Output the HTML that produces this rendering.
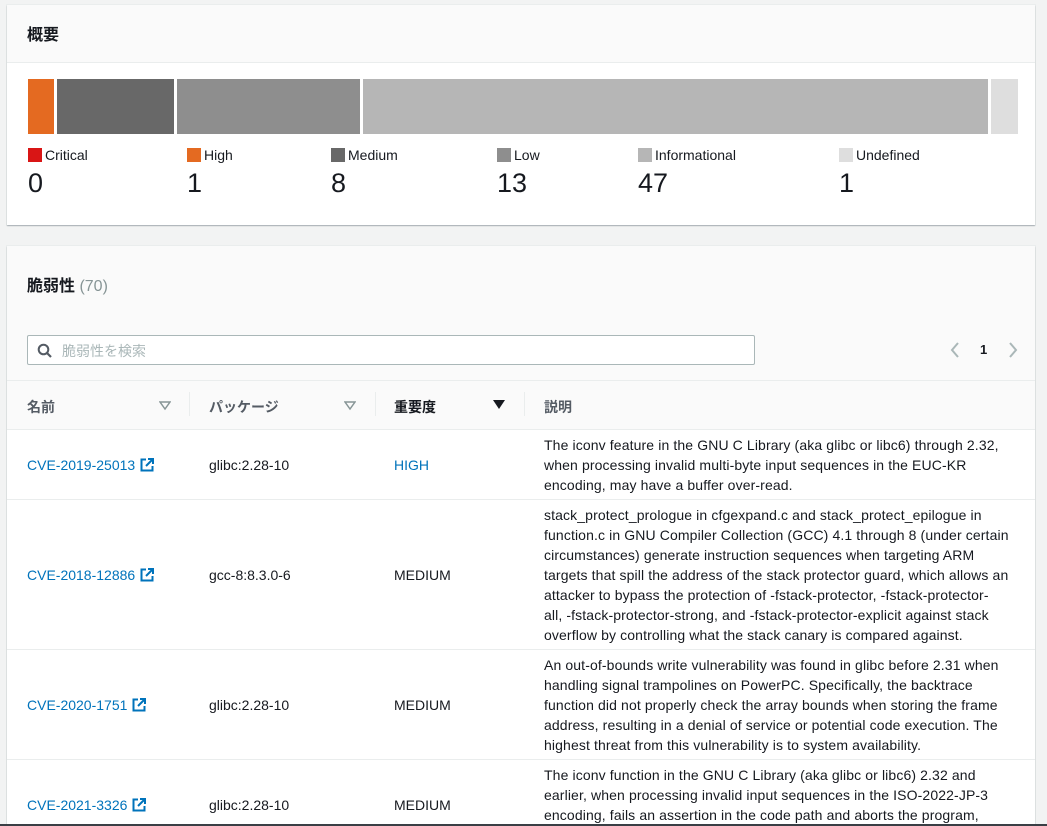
<!DOCTYPE html>
<html><head><meta charset="utf-8"><style>
*{margin:0;padding:0;box-sizing:border-box}
body{width:1047px;height:826px;overflow:hidden;background:#f2f3f3;font-family:"Liberation Sans","Noto Sans CJK JP",sans-serif;color:#16191f;position:relative;font-size:14px}
.a{position:absolute;white-space:nowrap}
.card{position:absolute;left:7px;width:1028px;background:#fff;box-shadow:0 1px 1px rgba(0,22,40,.3),0 0 0 1px #eaeded}
.seg{position:absolute;top:79px;height:55px}
.sw{display:inline-block;width:14px;height:14px;vertical-align:-2px;margin-right:3px}
.lg{position:absolute;top:147px;font-size:14px;color:#16191f}
.num{position:absolute;top:168px;font-size:27px;color:#16191f}
.hl{position:absolute;left:0;width:1028px;height:1px;background:#eaeded}
.link{color:#0073bb}
.desc{position:absolute;left:537px;line-height:20px;font-size:14px;letter-spacing:.12px;white-space:nowrap}
.ext{display:inline-block;vertical-align:-2px;margin-left:5px}
</style></head><body>
<div class="card" style="top:5px;height:220px">
 <div style="position:absolute;left:0;top:0;width:100%;height:58px;background:#fafafa;border-bottom:1px solid #eaeded"></div>
 <div class="a" style="left:20px;top:16px;font-size:16px;font-weight:bold">概要</div>
 <div class="seg" style="left:21px;width:26px;background:#e46a21;top:74px"></div>
 <div class="seg" style="left:50px;width:117px;background:#686868;top:74px"></div>
 <div class="seg" style="left:170px;width:183px;background:#8e8e8e;top:74px"></div>
 <div class="seg" style="left:356px;width:625px;background:#b6b6b6;top:74px"></div>
 <div class="seg" style="left:984px;width:27px;background:#dedede;top:74px"></div>
 <div class="lg" style="left:21px;top:142px"><span class="sw" style="background:#d91515"></span>Critical</div>
 <div class="lg" style="left:180px;top:142px"><span class="sw" style="background:#e46a21"></span>High</div>
 <div class="lg" style="left:324px;top:142px"><span class="sw" style="background:#686868"></span>Medium</div>
 <div class="lg" style="left:490px;top:142px"><span class="sw" style="background:#8e8e8e"></span>Low</div>
 <div class="lg" style="left:631px;top:142px"><span class="sw" style="background:#b6b6b6"></span>Informational</div>
 <div class="lg" style="left:832px;top:142px"><span class="sw" style="background:#dedede"></span>Undefined</div>
 <div class="num" style="left:21px;top:163px">0</div>
 <div class="num" style="left:180px;top:163px">1</div>
 <div class="num" style="left:324px;top:163px">8</div>
 <div class="num" style="left:490px;top:163px">13</div>
 <div class="num" style="left:631px;top:163px">47</div>
 <div class="num" style="left:832px;top:163px">1</div>
</div>

<div class="card" style="top:246px;height:580px">
 <div style="position:absolute;left:0;top:0;width:100%;height:184px;background:#fafafa"></div>
 <div class="a" style="left:20px;top:26px;font-size:16px;font-weight:bold">脆弱性 <span style="font-weight:normal;color:#879596">(70)</span></div>
 <div style="position:absolute;left:20px;top:89px;width:728px;height:30px;border:1px solid #aab7b8;border-radius:2px;background:#fff"></div>
 <svg class="a" style="left:30px;top:97px" width="16" height="16" viewBox="0 0 16 16"><circle cx="6.5" cy="6.5" r="4.8" fill="none" stroke="#545b64" stroke-width="2"/><path d="M10 10l4 4" stroke="#545b64" stroke-width="2.2"/></svg>
 <div class="a" style="left:55px;top:95px;color:#aab7b8;font-size:14px">脆弱性を検索</div>
 <svg class="a" style="left:942px;top:96px" width="12" height="16" viewBox="0 0 12 16"><path d="M9 1L3 8l6 7" fill="none" stroke="#aab7b8" stroke-width="2"/></svg>
 <div class="a" style="left:973px;top:96px;font-weight:bold;font-size:13px">1</div>
 <svg class="a" style="left:1000px;top:96px" width="12" height="16" viewBox="0 0 12 16"><path d="M3 1l6 7-6 7" fill="none" stroke="#aab7b8" stroke-width="2"/></svg>
 <div class="hl" style="top:134px"></div>
 <div class="hl" style="top:183px"></div>
 <div class="a" style="left:20px;top:151px;font-weight:bold;color:#545b64">名前</div>
 <svg class="a" style="left:152px;top:155px" width="12" height="10" viewBox="0 0 12 10"><path d="M1 1h10L6 8z" fill="none" stroke="#879596" stroke-width="1.5"/></svg>
 <div style="position:absolute;left:182px;top:146px;width:1px;height:24px;background:#eaeded"></div>
 <div class="a" style="left:202px;top:151px;font-weight:bold;color:#545b64">パッケージ</div>
 <svg class="a" style="left:337px;top:155px" width="12" height="10" viewBox="0 0 12 10"><path d="M1 1h10L6 8z" fill="none" stroke="#879596" stroke-width="1.5"/></svg>
 <div style="position:absolute;left:368px;top:146px;width:1px;height:24px;background:#eaeded"></div>
 <div class="a" style="left:387px;top:151px;font-weight:bold">重要度</div>
 <svg class="a" style="left:486px;top:154px" width="12" height="10" viewBox="0 0 12 10"><path d="M0 0h12L6 9z" fill="#16191f"/></svg>
 <div style="position:absolute;left:517px;top:146px;width:1px;height:24px;background:#eaeded"></div>
 <div class="a" style="left:537px;top:151px;font-weight:bold;color:#545b64">説明</div>

 <div class="a link" style="left:20px;top:211px">CVE-2019-25013<svg class="ext" width="14" height="14" viewBox="0 0 14 14"><path d="M6 1.5H1.5v11h11V8" fill="none" stroke="#0073bb" stroke-width="2"/><path d="M8 1h5v5M13 1L6 8" fill="none" stroke="#0073bb" stroke-width="2"/></svg></div>
 <div class="a" style="left:202px;top:211px">glibc:2.28-10</div>
 <div class="a link" style="left:387px;top:211px">HIGH</div>
 <div class="desc" style="top:189px">The iconv feature in the GNU C Library (aka glibc or libc6) through 2.32,<br>when processing invalid multi-byte input sequences in the EUC-KR<br>encoding, may have a buffer over-read.</div>
 <div class="hl" style="top:253px"></div>

 <div class="a link" style="left:20px;top:321px">CVE-2018-12886<svg class="ext" width="14" height="14" viewBox="0 0 14 14"><path d="M6 1.5H1.5v11h11V8" fill="none" stroke="#0073bb" stroke-width="2"/><path d="M8 1h5v5M13 1L6 8" fill="none" stroke="#0073bb" stroke-width="2"/></svg></div>
 <div class="a" style="left:202px;top:321px">gcc-8:8.3.0-6</div>
 <div class="a" style="left:387px;top:321px">MEDIUM</div>
 <div class="desc" style="top:259px">stack_protect_prologue in cfgexpand.c and stack_protect_epilogue in<br>function.c in GNU Compiler Collection (GCC) 4.1 through 8 (under certain<br>circumstances) generate instruction sequences when targeting ARM<br>targets that spill the address of the stack protector guard, which allows an<br>attacker to bypass the protection of -fstack-protector, -fstack-protector-<br>all, -fstack-protector-strong, and -fstack-protector-explicit against stack<br>overflow by controlling what the stack canary is compared against.</div>
 <div class="hl" style="top:403px"></div>

 <div class="a link" style="left:20px;top:451px">CVE-2020-1751<svg class="ext" width="14" height="14" viewBox="0 0 14 14"><path d="M6 1.5H1.5v11h11V8" fill="none" stroke="#0073bb" stroke-width="2"/><path d="M8 1h5v5M13 1L6 8" fill="none" stroke="#0073bb" stroke-width="2"/></svg></div>
 <div class="a" style="left:202px;top:451px">glibc:2.28-10</div>
 <div class="a" style="left:387px;top:451px">MEDIUM</div>
 <div class="desc" style="top:409px">An out-of-bounds write vulnerability was found in glibc before 2.31 when<br>handling signal trampolines on PowerPC. Specifically, the backtrace<br>function did not properly check the array bounds when storing the frame<br>address, resulting in a denial of service or potential code execution. The<br>highest threat from this vulnerability is to system availability.</div>
 <div class="hl" style="top:513px"></div>

 <div class="a link" style="left:20px;top:551px">CVE-2021-3326<svg class="ext" width="14" height="14" viewBox="0 0 14 14"><path d="M6 1.5H1.5v11h11V8" fill="none" stroke="#0073bb" stroke-width="2"/><path d="M8 1h5v5M13 1L6 8" fill="none" stroke="#0073bb" stroke-width="2"/></svg></div>
 <div class="a" style="left:202px;top:551px">glibc:2.28-10</div>
 <div class="a" style="left:387px;top:551px">MEDIUM</div>
 <div class="desc" style="top:519px">The iconv function in the GNU C Library (aka glibc or libc6) 2.32 and<br>earlier, when processing invalid input sequences in the ISO-2022-JP-3<br>encoding, fails an assertion in the code path and aborts the program,</div>
</div>
<div style="position:absolute;left:0;top:824px;width:1047px;height:2px;background:#3a3f45"></div>
</body></html>
